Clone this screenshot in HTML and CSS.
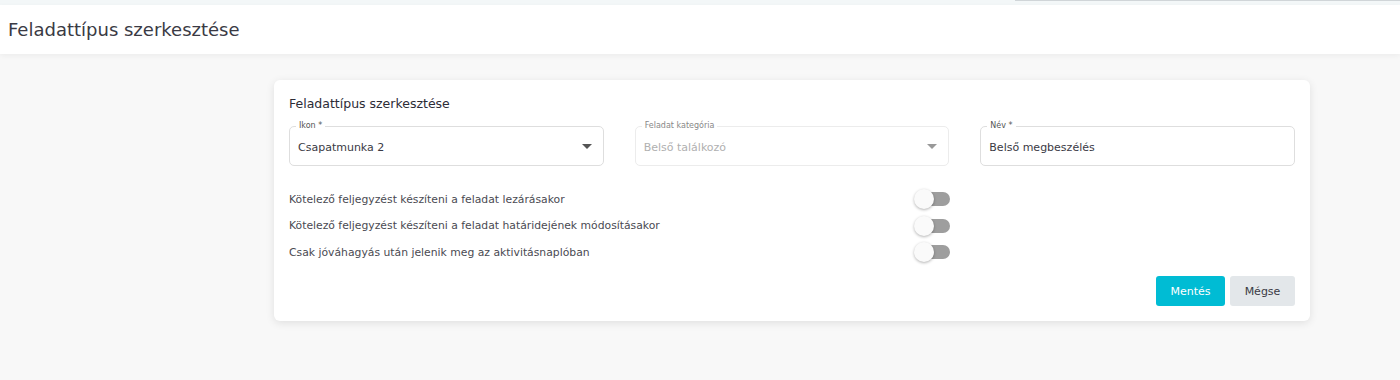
FILE: index.html
```html
<!DOCTYPE html>
<html lang="hu">
<head>
  <meta charset="UTF-8">
  <title>Feladattípus szerkesztése</title>
  <meta name="viewport" content="width=device-width, initial-scale=1.0">
  <link rel="stylesheet" href="styles.css">
</head>
<body>
  <div class="topstrip"><div class="topstrip-menu"></div></div>
  <div class="page-header">Feladattípus szerkesztése</div>
  <div class="content">
    <div class="card">
      <div class="card-title">Feladattípus szerkesztése</div>
      <div class="fields">
        <div class="field">
          <span class="field-label">Ikon *</span>
          <span class="field-value">Csapatmunka 2</span>
          <span class="caret"></span>
        </div>
        <div class="field disabled">
          <span class="field-label">Feladat kategória</span>
          <span class="field-value">Belső találkozó</span>
          <span class="caret"></span>
        </div>
        <div class="field">
          <span class="field-label">Név *</span>
          <span class="field-value">Belső megbeszélés</span>
        </div>
      </div>
      <div class="switch-list">
        <div class="switch-row">
          <span class="switch-text">Kötelező feljegyzést készíteni a feladat lezárásakor</span>
          <span class="switch"><span class="knob"></span></span>
        </div>
        <div class="switch-row">
          <span class="switch-text">Kötelező feljegyzést készíteni a feladat határidejének módosításakor</span>
          <span class="switch"><span class="knob"></span></span>
        </div>
        <div class="switch-row">
          <span class="switch-text">Csak jóváhagyás után jelenik meg az aktivitásnaplóban</span>
          <span class="switch"><span class="knob"></span></span>
        </div>
      </div>
      <div class="actions">
        <button class="btn primary">Mentés</button>
        <button class="btn secondary">Mégse</button>
      </div>
    </div>
  </div>
</body>
</html>
```

FILE: styles.css
```css
body { margin: 0; background: #f8f8f8; font-family: 'DejaVu Sans', 'Noto Sans', Arial, sans-serif; color: #3c3c46; height: 380px; overflow: hidden; }
.topstrip { height: 5px; background: #f3f7f8; display: flex; justify-content: flex-end; }
.topstrip-menu { width: 385px; height: 1px; background: #d0d5d8; }
.page-header { background: #fff; height: 49px; display: flex; align-items: center; padding-left: 8px; font-size: 18px; color: #3a3a44; box-shadow: 0 2px 6px rgba(0,0,0,0.05); position: relative; }
.content { padding: 26px 0 0 274px; }
.card { width: 1006px; background: #fff; border-radius: 6px; box-shadow: 0 2px 8px rgba(0,0,0,0.1); padding: 15px; }
.card-title { font-size: 12.5px; font-weight: 500; color: #2c2c36; margin-top: 1px; margin-bottom: 15px; }
.fields { display: grid; grid-template-columns: repeat(3, 1fr); gap: 31px; }
.field { position: relative; height: 40px; border: 1px solid #dedede; border-radius: 5px; display: flex; align-items: center; padding: 0 8px; box-sizing: border-box; }
.field-label { position: absolute; left: 6px; top: -6px; background: #fff; padding: 0 3px; font-size: 8px; color: #555; line-height: 10px; }
.field-value { font-size: 11px; color: #3a3a44; margin-top: 2px; }
.field.disabled { border-color: #ececec; }
.field.disabled .field-label { color: #888; }
.field.disabled .field-value { color: #b0b0b0; }
.caret { position: absolute; right: 11px; top: 17px; width: 0; height: 0; border-left: 5px solid transparent; border-right: 5px solid transparent; border-top: 5px solid #555; }
.field.disabled .caret { border-top-color: #999; }
.switch-list { width: 661px; margin-top: 23px; display: flex; flex-direction: column; gap: 6.5px; }
.switch-row { display: flex; align-items: center; justify-content: space-between; height: 20px; }
.switch-text { font-size: 10.8px; color: #4a4a52; }
.switch { position: relative; width: 33px; height: 14px; border-radius: 7px; background: #9e9e9e; }
.knob { position: absolute; left: -3px; top: -3px; width: 20px; height: 20px; border-radius: 50%; background: #fafafa; box-shadow: 0 1px 3px rgba(0,0,0,0.3); }
.actions { display: flex; justify-content: flex-end; gap: 5px; margin-top: 14px; }
.btn { border: none; border-radius: 3px; height: 30px; font-family: inherit; font-size: 11px; cursor: pointer; }
.btn.primary { background: #00bcd4; color: #fff; width: 69px; font-weight: 500; }
.btn.secondary { background: #e3e7ea; color: #3a3a44; width: 65px; }
```
